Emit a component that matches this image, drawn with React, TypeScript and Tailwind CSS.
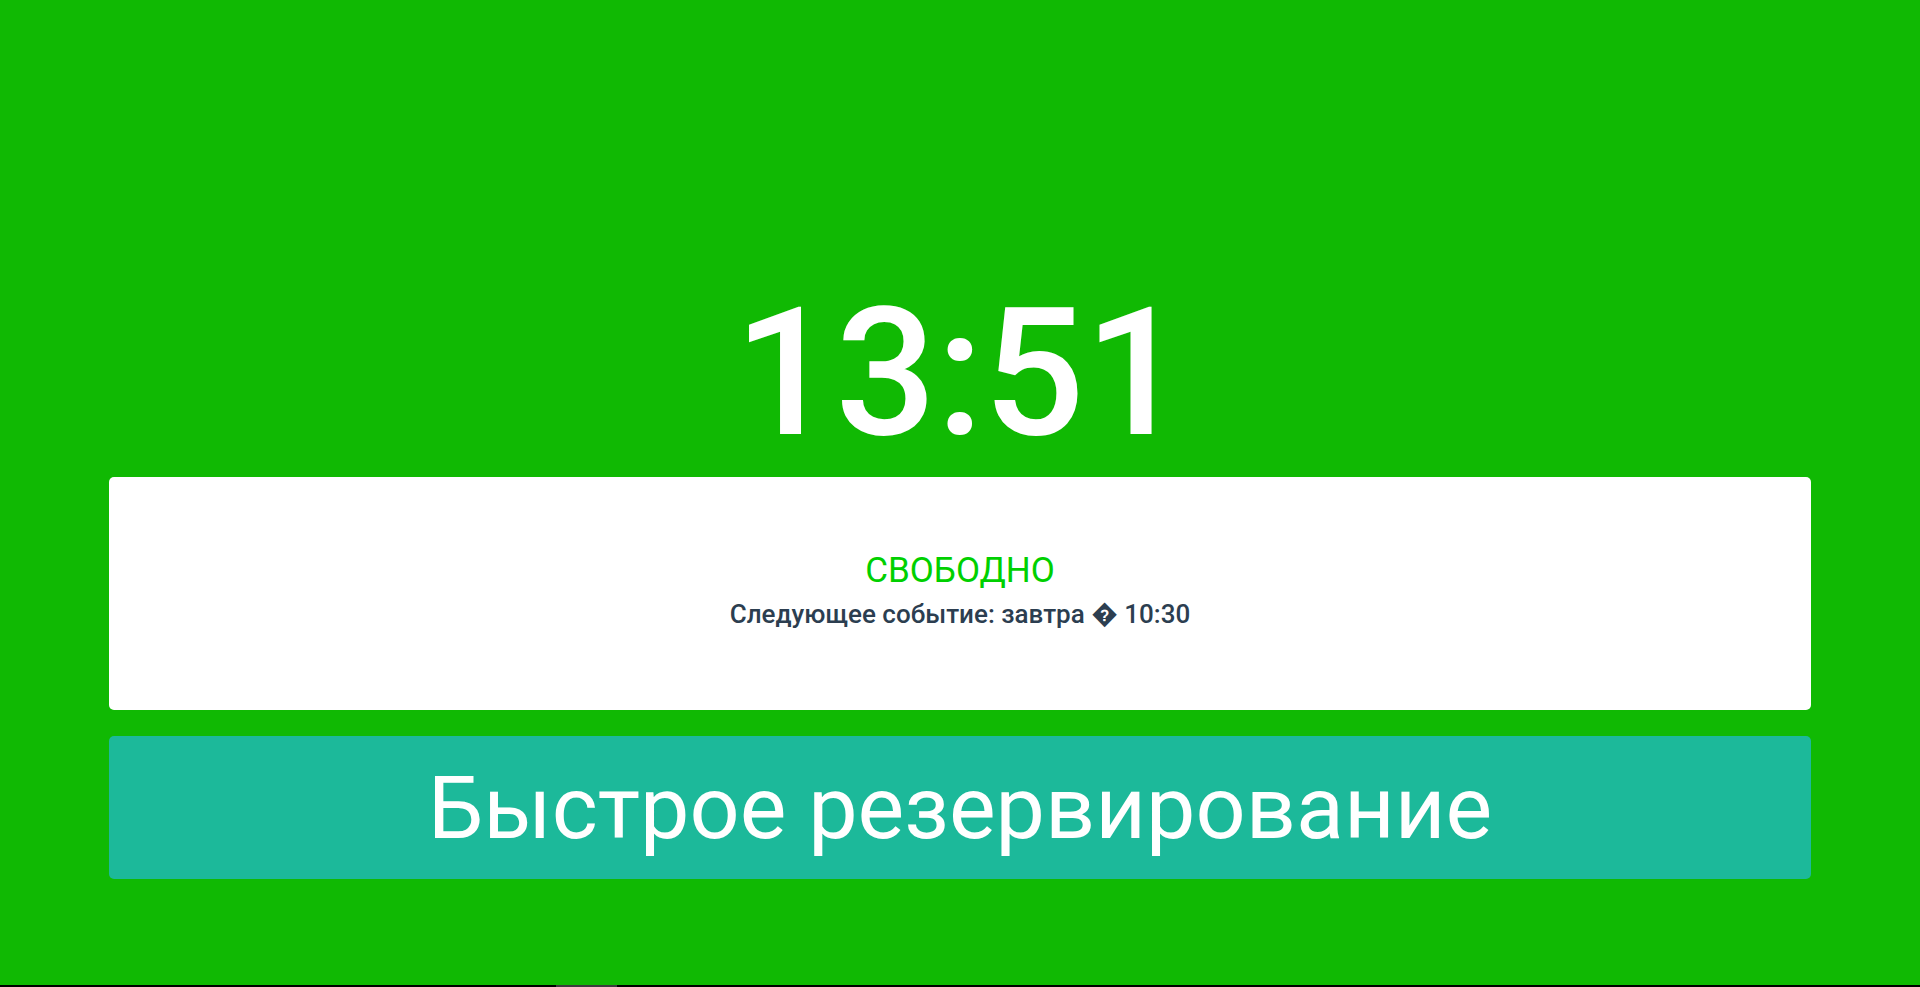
export default function App() {
  return (
    <div className="flex h-[987px] w-full flex-col overflow-hidden bg-[#10b903] font-['Roboto','Noto_Sans',sans-serif]">
      <main className="flex flex-1 flex-col px-[109px] pt-[284px]">
        <div className="mb-[16px] flex h-[177px] items-center justify-center text-[178px] font-medium leading-none text-white">
          13:51
        </div>
        <section className="flex h-[233px] flex-col items-center rounded-[5px] bg-white pt-[76px]">
          <div className="text-[35px] leading-none text-[#00d000]">СВОБОДНО</div>
          <div className="mt-[13px] text-[26px] font-medium leading-none text-[#2c3e50]">
            Следующее событие: завтра {"\uFFFD"} 10:30
          </div>
        </section>
        <button
          type="button"
          className="mt-[26px] flex h-[143px] items-center justify-center rounded-[5px] bg-[#1cb99a] text-[88px] leading-none text-white"
        >
          Быстрое резервирование
        </button>
      </main>
      <div className="flex h-[2px] bg-black">
        <div className="ml-[556px] w-[61px] bg-[#3c3c3c]" />
      </div>
    </div>
  );
}
